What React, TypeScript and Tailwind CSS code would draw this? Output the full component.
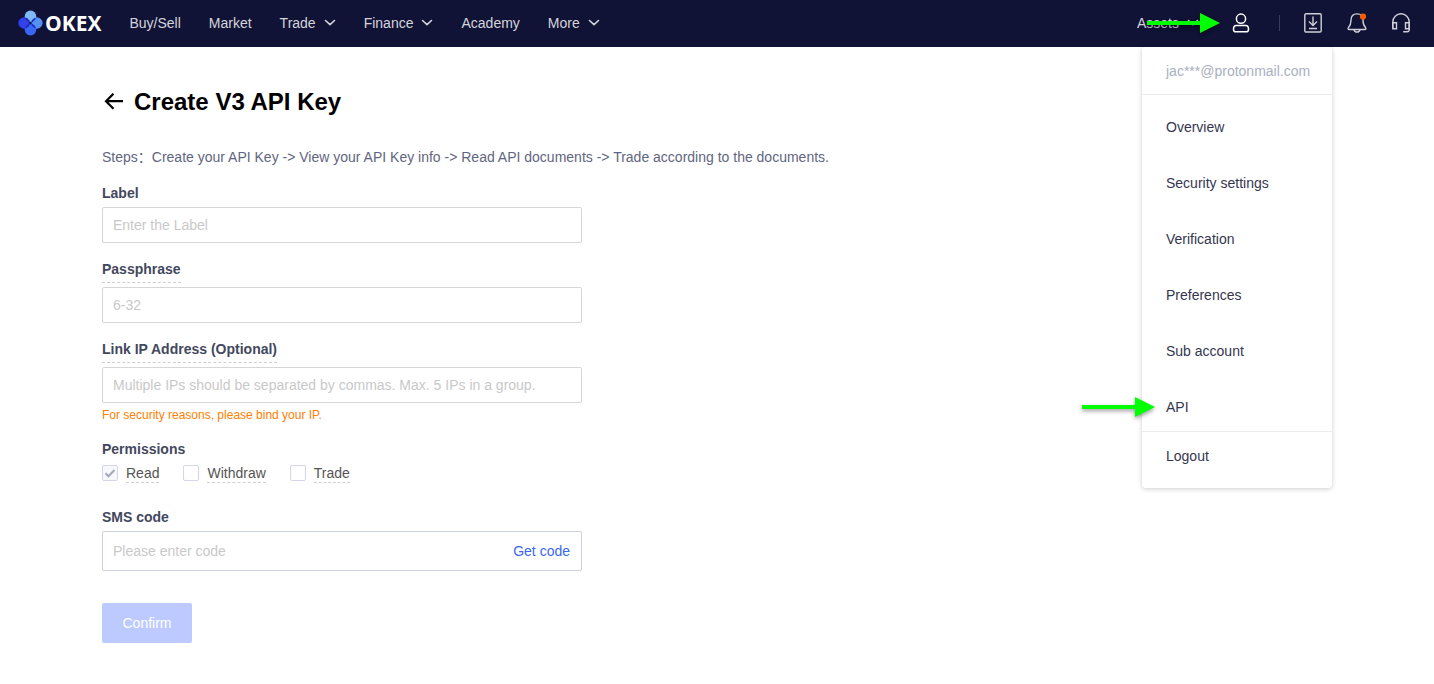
import { useState } from "react";
import type { ReactNode } from "react";

const navItems = [
  { label: "Buy/Sell", href: "#buy-sell" },
  { label: "Market", href: "#market" },
  { label: "Trade", href: "#trade", hasMenu: true },
  { label: "Finance", href: "#finance", hasMenu: true },
  { label: "Academy", href: "#academy" },
  { label: "More", href: "#more", hasMenu: true },
];

const accountItems = [
  { label: "Overview", href: "#overview" },
  { label: "Security settings", href: "#security" },
  { label: "Verification", href: "#verification" },
  { label: "Preferences", href: "#preferences" },
  { label: "Sub account", href: "#sub-account" },
  { label: "API", href: "#api", pointed: true },
];

function Logo() {
  return (
    <a href="#home" aria-label="OKEX" className="flex items-center gap-0.5">
      <svg width="25" height="26" viewBox="0 0 25 26">
        <circle cx="12.5" cy="6.4" r="5.8" fill="#7fb9f8" />
        <circle cx="18.8" cy="13" r="5.8" fill="#5790f5" />
        <circle cx="12.5" cy="19.6" r="5.8" fill="#3a66f5" />
        <circle cx="6.2" cy="13" r="5.8" fill="#3440ea" />
        <g fill="none" stroke="#1c2bb8" strokeWidth="1.6" strokeLinecap="round">
          <path d="M8.200 8.800l2.600 2.600M16.800 8.800l-2.600 2.600M8.200 17.200l2.600-2.600M16.800 17.200l-2.600-2.600" />
        </g>
        <path d="M12.500 11.400 14.100 13l-1.600 1.600-1.600-1.600z" fill="#101236" />
      </svg>
      <span className="font-['Open_Sans',sans-serif] text-[21px] leading-6 font-bold text-white">
        OKEX
      </span>
    </a>
  );
}

function Chevron() {
  return (
    <svg width="12" height="7" viewBox="0 0 12 7" fill="none" stroke="currentColor" strokeWidth="1.6">
      <path d="M1.500 1.500L6 5.600l4.500-4.100" strokeLinecap="round" strokeLinejoin="round" />
    </svg>
  );
}

function PointerArrow({ className }: { className: string }) {
  return (
    <svg
      width="74"
      height="20"
      viewBox="0 0 74 20"
      aria-hidden="true"
      className={`pointer-events-none absolute drop-shadow-[0_2px_2px_rgba(0,0,0,0.4)] ${className}`}
    >
      <path d="M0 8h53V0l20 10-20 10v-8H0z" fill="#00ff00" />
    </svg>
  );
}

function UserIcon() {
  return (
    <svg width="18" height="20" viewBox="0 0 18 20" fill="none" stroke="#fff" strokeWidth="1.5">
      <circle cx="9" cy="5.7" r="4.6" />
      <path d="M4.2 12.4h9.6c1.7 0 2.7 1.9 2.7 3.8 0 1.6-.9 2.6-2.3 2.6H3.8c-1.4 0-2.3-1-2.3-2.6 0-1.9 1-3.8 2.7-3.8z" />
    </svg>
  );
}

function DownloadIcon() {
  return (
    <svg width="18" height="20" viewBox="0 0 18 20" fill="none" stroke="#cfd0d7" strokeWidth="1.4">
      <rect x=".8" y=".8" width="16.4" height="18.2" rx="1.2" />
      <path d="M9 3.4v8.8M5 8.4l4 4 4-4M5 15.5h8" />
    </svg>
  );
}

function BellIcon() {
  return (
    <svg width="20" height="20" viewBox="0 0 20 20" fill="none" stroke="#cfd0d7" strokeWidth="1.4">
      <path d="M10 .9C6 .9 4 3.7 4 7.3c0 4-.7 5.4-2.500 7.300-.8.9-.4 1.900.7 1.900h15.600c1.100 0 1.500-1 .7-1.900C16.700 12.700 16 11.300 16 7.300 16 3.700 14 .9 10 .9z" />
      <path d="M7 16.800c.4 1.500 1.500 2.300 3 2.300s2.600-.8 3-2.300" />
      <circle cx="16" cy="3.600" r="3.100" fill="#ff5a00" stroke="none" />
    </svg>
  );
}

function HeadsetIcon() {
  return (
    <svg width="18" height="20" viewBox="0 0 18 20" fill="none" stroke="#cfd0d7" strokeWidth="1.400">
      <path d="M.8 15.500V9a8.200 8.200 0 0 1 16.400 0v7.500c0 1.500-.8 2.300-2.200 2.300h-3.800" />
      <path d="M.8 9.800h3.700v6H.8zM13.500 9.800h3.700v6h-3.700z" />
    </svg>
  );
}

function AccountMenu() {
  return (
    <div className="absolute top-full right-[102px] z-10 w-[190px] rounded bg-white text-sm leading-6 text-[#35364f] shadow-[0_1px_5px_rgba(0,0,0,0.2)]">
      <p className="border-b border-[#ececec] px-6 pt-3 pb-[11px] text-[#a9afc0]">
        jac***@protonmail.com
      </p>
      <ul className="flex flex-col gap-8 px-6 pt-5 pb-3">
        {accountItems.map((item) => (
          <li key={item.href} className="relative">
            {item.pointed && <PointerArrow className="top-0.5 -left-[84px]" />}
            <a href={item.href}>{item.label}</a>
          </li>
        ))}
      </ul>
      <div className="border-t border-[#ececec] px-6 pt-3 pb-5">
        <button type="button">Logout</button>
      </div>
    </div>
  );
}

function Header() {
  return (
    <header className="relative flex h-[47px] items-center justify-between bg-[#101236] pr-6 pb-0.5 pl-[18px] text-sm text-[#d4d5db]">
      <div className="flex items-center gap-7">
        <Logo />
        <nav className="flex items-center gap-7">
          {navItems.map((item) => (
            <a key={item.href} href={item.href} className="flex items-center gap-2">
              {item.label}
              {item.hasMenu && <Chevron />}
            </a>
          ))}
        </nav>
      </div>

      <div className="flex items-center">
        <a href="#assets" className="relative flex items-center gap-2 pr-[33px]">
          Assets
          <Chevron />
          <PointerArrow className="top-0 left-2.5" />
        </a>
        <button type="button" aria-label="Account">
          <UserIcon />
        </button>
        <span className="mr-6 ml-[29px] h-4 w-px bg-[#3a3c5a]" />
        <div className="flex items-center gap-[25px]">
          <button type="button" aria-label="Download">
            <DownloadIcon />
          </button>
          <button type="button" aria-label="Notifications">
            <BellIcon />
          </button>
          <button type="button" aria-label="Support">
            <HeadsetIcon />
          </button>
        </div>
      </div>

      <AccountMenu />
    </header>
  );
}

type FieldProps = {
  id: string;
  label: string;
  placeholder: string;
  dashed?: boolean;
  type?: string;
};

function Field({ id, label, placeholder, dashed, type = "text" }: FieldProps) {
  return (
    <div className="mt-4 flex flex-col items-start gap-1">
      <label
        htmlFor={id}
        className={`font-bold text-[#43485e] ${dashed ? "border-b border-dashed border-[#d0d0d0] pb-[3px]" : ""}`}
      >
        {label}
      </label>
      <input
        id={id}
        type={type}
        placeholder={placeholder}
        className="h-9 w-full rounded-xs border border-[#d6d6d6] px-2.5 placeholder:text-[#c9c9c9] focus:border-[#3075ee] focus:outline-none"
      />
    </div>
  );
}

type PermissionProps = {
  children: ReactNode;
  checked: boolean;
  disabled?: boolean;
  onChange?: () => void;
};

function Permission({ children, checked, disabled, onChange }: PermissionProps) {
  return (
    <label className="flex items-center gap-2 text-[#555]">
      <span className="grid">
        <input
          type="checkbox"
          checked={checked}
          disabled={disabled}
          readOnly={!onChange}
          onChange={onChange}
          className="peer col-start-1 row-start-1 size-4 appearance-none rounded-xs border border-[#d3d6e8] disabled:bg-[#f7f8fc]"
        />
        <svg
          viewBox="0 0 16 16"
          fill="none"
          stroke="#a3a8bb"
          strokeWidth="2"
          className="pointer-events-none invisible col-start-1 row-start-1 size-4 peer-checked:visible"
        >
          <path d="M3.500 8.300l3 3 6-6.300" />
        </svg>
      </span>
      <span className="border-b border-dashed border-[#d0d0d0] pt-0.5 leading-[17px]">
        {children}
      </span>
    </label>
  );
}

export default function App() {
  const [withdraw, setWithdraw] = useState(false);
  const [trade, setTrade] = useState(false);

  return (
    <div className="min-h-screen bg-white font-['Liberation_Sans','Noto_Sans_CJK_SC',sans-serif]">
      <Header />
      <main className="px-[102px] pt-[39px] pb-10 text-sm leading-5">
        <div className="flex items-center gap-2">
          <a href="#back" aria-label="Back" className="flex w-6 justify-center">
            <svg width="20" height="18" viewBox="0 0 20 18" fill="none" stroke="#000" strokeWidth="2.200">
              <path d="M19 8.200H2.500M9.500.7L2 8.200l7.500 7.500" />
            </svg>
          </a>
          <h1 className="text-2xl leading-8 font-bold text-black">Create V3 API Key</h1>
        </div>
        <p className="mt-[29px] text-[#5f6680]">
          Steps：Create your API Key -&gt; View your API Key info -&gt; Read API documents -&gt; Trade
          according to the documents.
        </p>

        <form className="max-w-[480px]" onSubmit={(e) => e.preventDefault()}>
          <Field id="label" label="Label" placeholder="Enter the Label" />
          <Field id="passphrase" label="Passphrase" placeholder="6-32" type="password" dashed />
          <Field
            id="ip"
            label="Link IP Address (Optional)"
            placeholder="Multiple IPs should be separated by commas. Max. 5 IPs in a group."
            dashed
          />
          <p className="mt-0.5 text-xs leading-5 text-[#ff8000]">
            For security reasons, please bind your IP.
          </p>

          <fieldset className="mt-3.5">
            <legend className="font-bold text-[#43485e]">Permissions</legend>
            <div className="mt-1 flex gap-6">
              <Permission checked disabled>
                Read
              </Permission>
              <Permission checked={withdraw} onChange={() => setWithdraw(!withdraw)}>
                Withdraw
              </Permission>
              <Permission checked={trade} onChange={() => setTrade(!trade)}>
                Trade
              </Permission>
            </div>
          </fieldset>

          <div className="mt-6">
            <label htmlFor="sms" className="block font-bold text-[#43485e]">
              SMS code
            </label>
            <div className="mt-1 flex h-10 items-center rounded-xs border border-[#cdd0e2] pr-[11px]">
              <input
                id="sms"
                type="text"
                placeholder="Please enter code"
                className="h-full min-w-0 flex-1 px-2.5 placeholder:text-[#c9c9c9] focus:outline-none"
              />
              <button type="button" className="text-[#3a68f0]">
                Get code
              </button>
            </div>
          </div>

          <button
            type="submit"
            disabled
            className="mt-8 h-10 w-[90px] rounded-xs bg-[#bccaff] text-white"
          >
            Confirm
          </button>
        </form>
      </main>
    </div>
  );
}
